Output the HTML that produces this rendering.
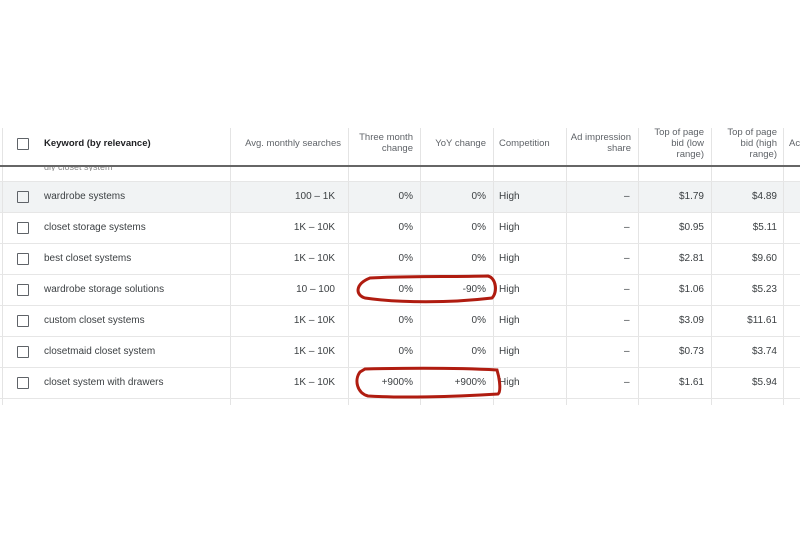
<!DOCTYPE html><html><head><style>
body{margin:0;width:800px;height:533px;background:#fff;position:relative;overflow:hidden;font-family:"Liberation Sans",Arial,sans-serif;color:#3c4043;font-size:10px}
.a{position:absolute;white-space:nowrap}
.cb{position:absolute;left:17px;width:10px;height:10px;border:1.5px solid #5f6368;border-radius:1px}
.vl{position:absolute;width:1px;background:#e4e4e4;top:128px;height:277px}
.hl{position:absolute;left:0;width:800px;height:1px;background:#e6e6e6}
.h{color:#5f6368;font-size:9.5px;line-height:11px}
.r{text-align:right}
</style></head><body>
<div class="a" style="left:0;top:181px;width:800px;height:31px;background:#f1f3f4"></div>
<div class="vl" style="left:2px"></div>
<div class="vl" style="left:230px"></div><div class="vl" style="left:348px"></div><div class="vl" style="left:420px"></div><div class="vl" style="left:493px"></div><div class="vl" style="left:566px"></div><div class="vl" style="left:638px"></div><div class="vl" style="left:711px"></div><div class="vl" style="left:783px"></div>
<div class="cb" style="top:138px"></div>
<div class="a" style="left:44px;top:138px;font-weight:bold;color:#202124;font-size:9.5px">Keyword (by relevance)</div>
<div class="a h r" style="right:459px;top:138px">Avg. monthly searches</div>
<div class="a h r" style="right:387px;top:132px">Three month<br>change</div>
<div class="a h r" style="right:314px;top:138px">YoY change</div>
<div class="a h" style="left:499px;top:138px">Competition</div>
<div class="a h r" style="right:169px;top:132px">Ad impression<br>share</div>
<div class="a h r" style="right:96px;top:127px">Top of page<br>bid (low<br>range)</div>
<div class="a h r" style="right:23px;top:127px">Top of page<br>bid (high<br>range)</div>
<div class="a h" style="left:789px;top:138px">Ac</div>
<div class="a" style="left:0;top:165px;width:800px;height:2px;background:#666"></div>
<div class="a" style="left:44px;top:167px;height:4px;overflow:hidden;color:#888;font-size:9px;line-height:0">dly closet system</div>
<div class="hl" style="top:181px"></div><div class="hl" style="top:212px"></div><div class="hl" style="top:243px"></div><div class="hl" style="top:274px"></div><div class="hl" style="top:305px"></div><div class="hl" style="top:336px"></div><div class="hl" style="top:367px"></div><div class="hl" style="top:398px"></div>
<div id="rows"></div>
<script>
var d=[["wardrobe systems","100 – 1K","0%","0%","$1.79","$4.89"],["closet storage systems","1K – 10K","0%","0%","$0.95","$5.11"],["best closet systems","1K – 10K","0%","0%","$2.81","$9.60"],["wardrobe storage solutions","10 – 100","0%","-90%","$1.06","$5.23"],["custom closet systems","1K – 10K","0%","0%","$3.09","$11.61"],["closetmaid closet system","1K – 10K","0%","0%","$0.73","$3.74"],["closet system with drawers","1K – 10K","+900%","+900%","$1.61","$5.94"]];
var h="";d.forEach(function(r,i){var y=191+31*i;
h+='<div class="cb" style="top:'+y+'px"></div><div class="a" style="left:44px;top:'+y+'px">'+r[0]+'</div>'+
'<div class="a r" style="right:465px;top:'+y+'px">'+r[1]+'</div><div class="a r" style="right:387px;top:'+y+'px">'+r[2]+'</div><div class="a r" style="right:314px;top:'+y+'px">'+r[3]+'</div><div class="a" style="left:499px;top:'+y+'px">High</div><div class="a" style="left:624px;top:'+y+'px">–</div><div class="a r" style="right:96px;top:'+y+'px">'+r[4]+'</div><div class="a r" style="right:23px;top:'+y+'px">'+r[5]+'</div>';});
document.getElementById("rows").innerHTML=h;
</script>
<svg class="a" style="left:0;top:0" width="800" height="533"><g fill="none" stroke="#b01c10" stroke-width="3" stroke-linecap="round">
<path d="M370 278 C410 276 450 277 488 276 C496 278 498 292 492 298 C450 303 400 303 365 298 C355 295 355 284 370 278 Z"/>
<path d="M365 369 C410 368 460 368 497 370 C500 380 501 392 498 394 C450 397 400 398 368 396 C357 393 354 380 360 372 Z"/>
</g></svg>
</body></html>
